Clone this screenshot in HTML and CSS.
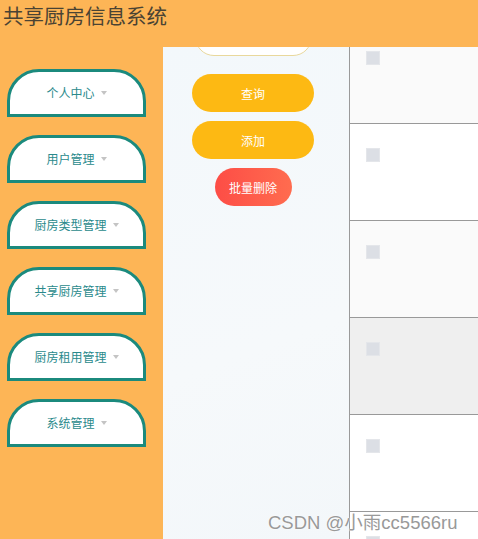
FILE: index.html
```html
<!DOCTYPE html>
<html lang="zh">
<head>
<meta charset="utf-8">
<title>共享厨房信息系统</title>
<link rel="stylesheet" href="styles.css">
</head>
<body>
<header class="header">
  <h1 class="title">共享厨房信息系统</h1>
</header>
<div class="layout">
  <nav class="sidebar">
    <div class="menu-item"><span>个人中心</span><i class="caret"></i></div>
    <div class="menu-item"><span>用户管理</span><i class="caret"></i></div>
    <div class="menu-item"><span>厨房类型管理</span><i class="caret"></i></div>
    <div class="menu-item"><span>共享厨房管理</span><i class="caret"></i></div>
    <div class="menu-item"><span>厨房租用管理</span><i class="caret"></i></div>
    <div class="menu-item"><span>系统管理</span><i class="caret"></i></div>
  </nav>
  <section class="panel">
    <div class="panel-inner">
      <div class="search-input"></div>
      <button class="btn btn-yellow btn-first">查询</button>
      <button class="btn btn-yellow">添加</button>
      <button class="btn btn-red">批量删除</button>
    </div>
  </section>
  <section class="table">
    <div class="table-inner">
      <div class="row row-odd"><span class="checkbox"></span></div>
      <div class="row"><span class="checkbox"></span></div>
      <div class="row row-odd"><span class="checkbox"></span></div>
      <div class="row row-hover"><span class="checkbox"></span></div>
      <div class="row"><span class="checkbox"></span></div>
      <div class="row"><span class="checkbox"></span></div>
    </div>
  </section>
</div>
<div class="watermark">CSDN @小雨cc5566ru</div>
</body>
</html>
```
FILE: styles.css
```css
* { box-sizing: border-box; }
html, body {
  margin: 0;
  padding: 0;
  width: 478px;
  height: 539px;
  overflow: hidden;
}
body {
  background: #fdb556;
  font-family: "Noto Sans CJK SC", "Noto Sans", sans-serif;
  position: relative;
}
.header {
  height: 47px;
  background: #fdb556;
  padding: 1px 0 0 3px;
}
.title {
  margin: 0;
  font-size: 20.5px;
  font-weight: normal;
  line-height: 28px;
  color: #4a4333;
}
.layout {
  display: flex;
  height: 492px;
}
.sidebar {
  width: 163px;
  flex: none;
  padding: 22px 0 0 7px;
  display: flex;
  flex-direction: column;
  gap: 18px;
}
.menu-item {
  width: 139px;
  height: 48px;
  background: #fff;
  border: 3px solid #1b8a7d;
  border-radius: 32px 32px 0 0;
  display: flex;
  align-items: center;
  justify-content: center;
  font-size: 12px;
  color: #2a8a8c;
  padding-bottom: 1px;
}
.caret {
  display: inline-block;
  width: 0;
  height: 0;
  margin-left: 6px;
  border-left: 3.5px solid transparent;
  border-right: 3.5px solid transparent;
  border-top: 4px solid #c4c4c4;
}
.panel {
  width: 186px;
  flex: none;
  background: linear-gradient(160deg, #f3f8fb 0%, #f6f9fb 60%, #f3f7fa 100%);
  overflow: hidden;
}
.panel-inner {
  display: flex;
  flex-direction: column;
  align-items: center;
  padding-right: 6px;
  margin-top: -29px;
}
.search-input {
  width: 117px;
  height: 38px;
  background: #fff;
  border: 1px solid #e9d89c;
  border-radius: 19px;
}
.btn {
  border: none;
  height: 38px;
  border-radius: 19px;
  color: #fff;
  font-family: "Noto Sans CJK SC", sans-serif;
  font-size: 12px;
  padding: 0;
  margin-top: 9px;
}
.btn-first { margin-top: 18px; }
.btn-yellow {
  width: 122px;
  background: #fdb913;
}
.btn-red {
  width: 77px;
  background: linear-gradient(to right, #fd4d46, #ff6c4f);
}
.table {
  flex: 1;
  border-left: 1px solid #9a9a9a;
  overflow: hidden;
  background: #fff;
}
.table-inner {
  margin-top: -20px;
}
.row {
  height: 97px;
  border-bottom: 1px solid #999;
  padding: 24px 0 0 16px;
  background: #fff;
}
.row-odd { background: #fafafa; }
.row-hover { background: #efefef; }
.checkbox {
  display: block;
  width: 14px;
  height: 14px;
  background: #dcdfe5;
  border: 1px solid #e4e6ea;
}
.watermark {
  position: absolute;
  left: 268px;
  top: 508px;
  font-family: "Liberation Sans", Arial, "Noto Sans CJK SC", sans-serif;
  font-size: 18.5px;
  color: #999;
  text-shadow: 0 0 2px #fff, 0 0 1px #fff;
  white-space: nowrap;
}
```
